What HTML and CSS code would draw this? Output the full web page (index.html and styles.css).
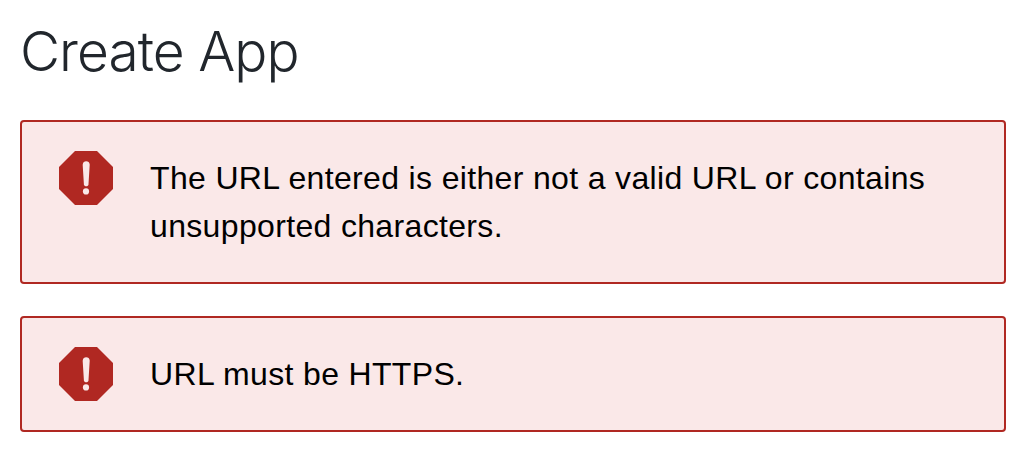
FILE: index.html
```
<!DOCTYPE html>
<html lang="en">
<head>
<meta charset="utf-8">
<title>Create App</title>
<link rel="stylesheet" href="styles.css">
</head>
<body>
<main class="page">
  <h1 class="title">Create App</h1>
  <div class="alert" role="alert">
    <svg class="alert-icon" viewBox="0 0 54 54" aria-hidden="true">
      <path class="octagon" d="M16 0H38L54 16V38L38 54H16L0 38V16Z"/>
      <path class="mark" d="M23.7 13.7C23.7 9.2 30.7 9.2 30.7 13.7L29.5 33.2C29.3 35.9 25.1 35.9 24.9 33.2Z"/>
      <circle class="mark" cx="27" cy="40.4" r="3.1"/>
    </svg>
    <p class="alert-text">The URL entered is either not a valid URL or contains unsupported characters.</p>
  </div>
  <div class="alert" role="alert">
    <svg class="alert-icon" viewBox="0 0 54 54" aria-hidden="true">
      <path class="octagon" d="M16 0H38L54 16V38L38 54H16L0 38V16Z"/>
      <path class="mark" d="M23.7 13.7C23.7 9.2 30.7 9.2 30.7 13.7L29.5 33.2C29.3 35.9 25.1 35.9 24.9 33.2Z"/>
      <circle class="mark" cx="27" cy="40.4" r="3.1"/>
    </svg>
    <p class="alert-text">URL must be HTTPS.</p>
  </div>
</main>
</body>
</html>
```
FILE: styles.css
```
* { box-sizing: border-box; }
body { margin: 0; background: #fff; color: #000; font-family: "Liberation Sans", Arial, sans-serif; }
.page { padding: 15px 16px 20px 20px; }
.title { margin: 0 0 33px; font-family: Inter, sans-serif; font-size: 55px; font-weight: 300; line-height: 72px; letter-spacing: -0.95px; color: #21262c; }
.alert { display: flex; align-items: flex-start; gap: 37px; padding: 29px 36px 29px 37px; border: 2px solid #b02822; border-radius: 4px; background: #fae8e8; }
.alert + .alert { margin-top: 32px; }
.alert-icon { flex: none; width: 54px; height: 54px; }
.octagon { fill: #b02822; }
.mark { fill: #fae8e8; }
.alert-text { margin: 3px 0; font-size: 32px; line-height: 48px; letter-spacing: 0.34px; }
```
